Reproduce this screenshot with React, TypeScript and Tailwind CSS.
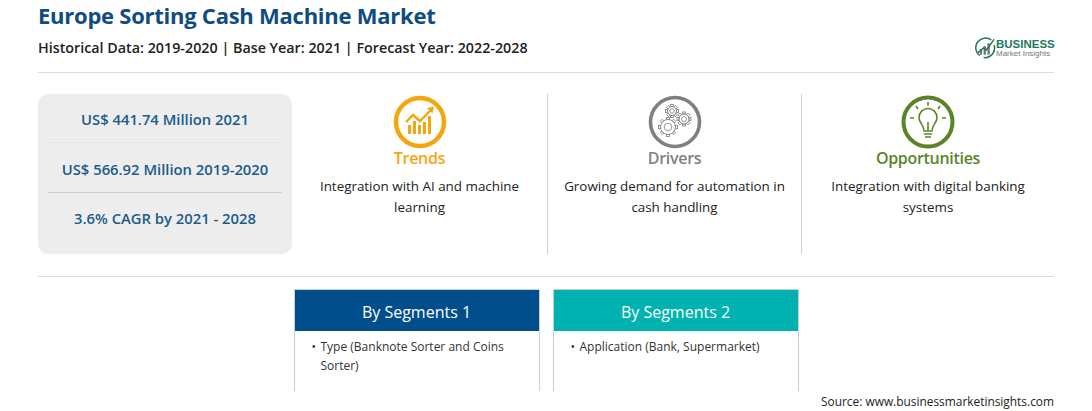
const font = "[font-family:'Open_Sans',sans-serif]"

function Logo() {
  return (
    <div className="flex items-center w-[80px] h-[26px]">
      <svg width="21" height="24" viewBox="0 0 22 24" className="shrink-0">
        <path d="M5 20 A10 10 0 0 1 17 3.5" fill="none" stroke="#1d7a5f" strokeWidth="1.6" />
        <path d="M20 9 A10 10 0 0 1 9 22" fill="none" stroke="#1d7a5f" strokeWidth="1.6" />
        <rect x="5" y="13" width="2.5" height="6" fill="#777" />
        <rect x="9" y="10" width="2.5" height="9" fill="#777" />
        <rect x="13" y="7" width="2.5" height="12" fill="#777" />
        <path d="M3 17 L9 12 L12 14 L20 3" fill="none" stroke="#1d7a5f" strokeWidth="1.6" />
      </svg>
      <div className="flex flex-col">
        <span className="text-[11.5px] leading-[10px] font-bold text-[#1d7a5f] font-['Liberation_Sans',sans-serif]">BUSINESS</span>
        <span className="text-[8px] leading-[9px] text-[#777] font-['Liberation_Sans',sans-serif]">Market Insights</span>
      </div>
    </div>
  )
}

function TrendsIcon() {
  return (
    <svg width="54" height="54" viewBox="0 0 54 54">
      <circle cx="27" cy="27" r="24" fill="none" stroke="#f5a60f" strokeWidth="4.5" />
      <path d="M13 27 L20 20 L27 26 L38 15" fill="none" stroke="#f5a60f" strokeWidth="2.4" />
      <path d="M34 13 L41 11.5 L39.5 18.5 Z" fill="#f5a60f" />
      <rect x="15" y="30" width="3" height="9" fill="#f5a60f" />
      <rect x="20" y="26" width="3" height="13" fill="#f5a60f" />
      <rect x="25" y="30" width="3" height="9" fill="#f5a60f" />
      <rect x="30" y="27" width="3" height="12" fill="#f5a60f" />
      <rect x="35" y="21" width="3" height="18" fill="#f5a60f" />
    </svg>
  )
}

function Gear({ x, y, r }: { x: number; y: number; r: number }) {
  const teeth = [0, 45, 90, 135, 180, 225, 270, 315]
  return (
    <g fill="none" stroke="#8a8a8a" strokeWidth="0.9">
      <circle cx={x} cy={y} r={r} />
      <circle cx={x} cy={y} r={r * 0.5} />
      {teeth.map((a) => (
        <rect key={a} x={x - 1.5} y={y - r - 2} width="3" height="2" transform={`rotate(${a} ${x} ${y})`} />
      ))}
    </g>
  )
}

function DriversIcon() {
  return (
    <svg width="54" height="54" viewBox="0 0 54 54">
      <circle cx="27" cy="27" r="24.5" fill="none" stroke="#808080" strokeWidth="3.6" />
      <Gear x={24} y={16} r={4.5} />
      <Gear x={36} y={24} r={5} />
      <Gear x={20} y={32} r={7.5} />
    </svg>
  )
}

function OpportunitiesIcon() {
  return (
    <svg width="54" height="54" viewBox="0 0 54 54" fill="none" stroke="#5a8527">
      <circle cx="27" cy="27" r="24.5" strokeWidth="4" />
      <path d="M23 36 C23 30 18 28 18 22.5 A9 9 0 0 1 36 22.5 C36 28 31 30 31 36 Z" strokeWidth="1.6" />
      <path d="M23 39 H31 M24 42 H30 M27 36 V27" strokeWidth="1.6" />
      <path d="M27 7 V10.5 M15 11 L17 14 M39 11 L37 14 M9 23 H13 M41 23 H45" strokeWidth="1.6" />
    </svg>
  )
}

function Feature({ icon, title, color, text, className }: { icon: React.ReactNode; title: string; color: string; text: string; className?: string }) {
  return (
    <div className={`flex flex-col items-center ${className}`}>
      <div className="mt-[1px] h-[54px]">{icon}</div>
      <div className={`text-[16px] leading-[20px] font-semibold -mt-[1px] tracking-[-0.3px] ${color}`}>{title}</div>
      <div className="mt-[8px] w-[232px] text-center text-[13.4px] leading-[21px] text-[#222]">{text}</div>
    </div>
  )
}

function Segment({ title, color, lines }: { title: string; color: string; lines: string }) {
  return (
    <div className="w-[246px] h-[102px] border-x border-t border-[#c5d0da]">
      <div className={`h-[41px] pt-[2px] flex items-center justify-center text-white text-[16px] ${color}`}>{title}</div>
      <div className="pl-[17px] pr-[24px] pt-[6px] flex text-[12px] leading-[19px] text-[#333]">
        <span className="w-[9px] shrink-0">•</span>
        <span>{lines}</span>
      </div>
    </div>
  )
}

export default function App() {
  return (
    <div className={`w-[1092px] h-[411px] overflow-hidden bg-white px-[38px] ${font}`}>
      <div className="flex justify-between h-[73px] border-b border-[#dcdcdc]">
        <div>
          <h1 className="text-[22px] leading-[30px] font-bold text-[#0f4c81] tracking-[-0.25px]">Europe Sorting Cash Machine Market</h1>
          <p className="mt-[8px] text-[14.3px] leading-[20px] font-semibold text-[#222]">Historical Data: 2019-2020 | Base Year: 2021 | Forecast Year: 2022-2028</p>
        </div>
        <div className="mt-[35px] -mr-px"><Logo /></div>
      </div>

      <div className="flex mt-[21px] h-[160px]">
        <div className="w-[254px] bg-[#eeedee] rounded-[10px] px-[10px] pt-[5px] text-center text-[14.8px] font-semibold text-[#1a5c8a]">
          <div className="h-[44px] leading-[40px] border-b border-[#e6e5e6]">US$ 441.74 Million 2021</div>
          <div className="h-[50px] leading-[52px] border-b border-[#cfcfcf]">US$ 566.92 Million 2019-2020</div>
          <div className="h-[50px] leading-[50px]">3.6% CAGR by 2021 - 2028</div>
        </div>
        <Feature icon={<TrendsIcon />} title="Trends" color="text-[#f5a60f]" text="Integration with AI and machine learning" className="w-[256px] border-r border-[#d0d0d0]" />
        <Feature icon={<DriversIcon />} title="Drivers" color="text-[#808080]" text="Growing demand for automation in cash handling" className="w-[254px] border-r border-[#d0d0d0]" />
        <Feature icon={<OpportunitiesIcon />} title="Opportunities" color="text-[#5a8527]" text="Integration with digital banking systems" className="w-[252px]" />
      </div>

      <div className="mt-[22px] border-t border-[#dcdcdc] pt-[12px] flex justify-center gap-[13px]">
        <Segment title="By Segments 1" color="bg-[#004f8c]" lines="Type (Banknote Sorter and Coins Sorter)" />
        <Segment title="By Segments 2" color="bg-[#00b3b0]" lines="Application (Bank, Supermarket)" />
      </div>

      <div className="text-right text-[11.9px] leading-[16px] text-[#222] mt-[2px]">Source: www.businessmarketinsights.com</div>
    </div>
  )
}
